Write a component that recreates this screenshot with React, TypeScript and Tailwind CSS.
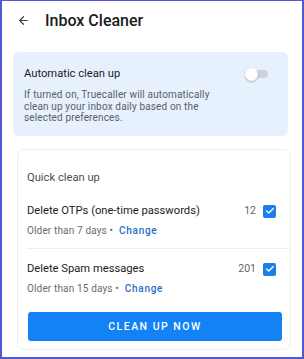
import { ArrowLeft, Check } from "lucide-react";

function Row({ title, count, age }: { title: string; count: number; age: string }) {
  return (
    <div className="pr-[14px]">
      <div className="flex items-center justify-between h-[14px]">
        <span className="text-[11.2px] leading-[14px] text-[#1c1c1c]">{title}</span>
        <div className="flex items-center gap-[7px]">
          <span className="text-[10.5px] text-[#5f6368]">{count}</span>
          <span className="w-[13px] h-[13px] rounded-[2px] bg-[#1a7fe8] flex items-center justify-center">
            <Check className="w-[10px] h-[10px] text-white" strokeWidth={3.2} />
          </span>
        </div>
      </div>
      <div className="mt-[7px] text-[10px] leading-[12px] text-[#676b70] tracking-[0.15px]">
        {age} <span>•</span>
        <span className="ml-[6px] font-medium text-[#1f6fc4] tracking-[0.7px]">Change</span>
      </div>
    </div>
  );
}

export default function App() {
  return (
    <div className="w-[304px] h-[359px] bg-white border-2 border-t border-[#4f57d4] overflow-hidden font-['Roboto',sans-serif]">
      <div className="flex items-center h-[39px] pl-[15px]">
        <ArrowLeft className="w-[13px] h-[13px] text-[#444]" strokeWidth={2.2} />
        <span className="ml-[15px] text-[16px] font-medium text-[#1b1b1b]">Inbox Cleaner</span>
      </div>

      <div className="ml-[11px] mr-[14px] mt-[12px] rounded-[6px] bg-[#e7f1fd] pl-[11px] pr-[12px] pt-[15px] pb-[12px]">
        <div className="flex items-center justify-between h-[14px]">
          <span className="text-[11.2px] leading-[14px] text-[#1c1c1c]">Automatic clean up</span>
          <div className="relative w-[18px] h-[8px] mr-[8px] rounded-full bg-[#cfd2d6]">
            <div className="absolute -left-[5px] -top-[2.5px] w-[13px] h-[13px] rounded-full bg-white shadow-[0_1px_2px_rgba(0,0,0,0.3)]" />
          </div>
        </div>
        <p className="mt-[8px] text-[10px] leading-[11.7px] text-[#5b6066] tracking-[0.15px] w-[200px]">
          If turned on, Truecaller will automatically clean up your inbox daily based on the selected preferences.
        </p>
      </div>

      <div className="ml-[15px] mr-[11px] mt-[13px] rounded-[7px] border border-[#eceef0] pl-[9px] pt-[21px] pb-[8px]">
        <div className="text-[11.2px] leading-[14px] text-[#4a4d52]">Quick clean up</div>
        <div className="mt-[19px]">
          <Row title="Delete OTPs (one-time passwords)" count={12} age="Older than 7 days" />
          <div className="mt-[11px] h-px bg-[#eeeff1]" />
          <div className="mt-[13px]">
            <Row title="Delete Spam messages" count={201} age="Older than 15 days" />
          </div>
        </div>
        <div className="pr-[9px] mt-[17px]">
          <button className="w-full h-[29px] ml-[1px] rounded-[3px] bg-[#1282f5] text-white text-[10.5px] font-medium tracking-[1.5px]">
            CLEAN UP NOW
          </button>
        </div>
      </div>
    </div>
  );
}
